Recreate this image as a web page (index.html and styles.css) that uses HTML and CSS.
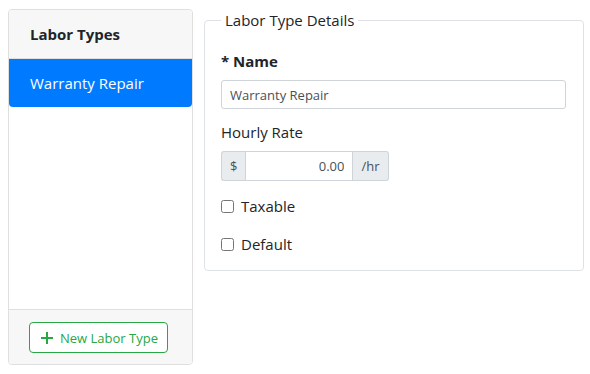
FILE: index.html
```html
<!DOCTYPE html>
<html lang="en">
<head>
    <meta charset="UTF-8">
    <title>Labor Types</title>
    <link rel="stylesheet" href="styles.css">
</head>
<body>
    <div class="page">
        <div class="types-card">
            <div class="types-header">Labor Types</div>
            <div class="types-list">
                <a href="#" class="types-item active">Warranty Repair</a>
            </div>
            <div class="types-footer">
                <button class="btn-new">
                    <svg width="12" height="12" viewBox="0 0 12 12"><path d="M6 0v12M0 6h12" stroke="#28a745" stroke-width="2" fill="none"/></svg>
                    New Labor Type
                </button>
            </div>
        </div>

        <fieldset class="details">
            <legend>Labor Type Details</legend>

            <label class="field-label required" for="name">* Name</label>
            <input class="text-input" id="name" type="text" value="Warranty Repair">

            <label class="field-label rate-label" for="rate">Hourly Rate</label>
            <div class="input-group">
                <span class="addon">$</span>
                <input class="rate-input" id="rate" type="text" value="0.00">
                <span class="addon">/hr</span>
            </div>

            <label class="check"><input type="checkbox"> Taxable</label>
            <label class="check"><input type="checkbox"> Default</label>
        </fieldset>
    </div>
</body>
</html>
```

FILE: styles.css
```css
html, body {
    margin: 0;
    height: 100%;
    font-family: "Segoe UI", "Open Sans", sans-serif;
    font-size: 15px;
    color: #212529;
    background: #fff;
}

.page {
    display: flex;
    align-items: flex-start;
    padding: 9px 0 0 8px;
}

.types-card {
    flex-shrink: 0;
    width: 185px;
    height: 356px;
    box-sizing: border-box;
    border: 1px solid #dfdfdf;
    border-radius: 4px;
    display: flex;
    flex-direction: column;
    overflow: hidden;
}

.types-header {
    padding: 12px 21px;
    line-height: 24px;
    font-weight: bold;
    background: #f7f7f7;
    border-bottom: 1px solid #dfdfdf;
}

.types-list {
    flex: 1;
}

.types-item {
    display: block;
    padding: 12px 21px;
    line-height: 24px;
    color: #212529;
    text-decoration: none;
}

.types-item.active {
    background: #007bff;
    color: #fff;
    border-radius: 0 0 4px 4px;
}

.types-footer {
    background: #f7f7f7;
    border-top: 1px solid #dfdfdf;
    padding: 12px 20px;
    height: 55px;
    box-sizing: border-box;
}

.btn-new {
    display: flex;
    align-items: center;
    gap: 7px;
    height: 31px;
    width: 139px;
    padding: 0 0 0 11px;
    white-space: nowrap;
    font-family: inherit;
    font-size: 13px;
    color: #28a745;
    background: #fff;
    border: 1px solid #28a745;
    border-radius: 4px;
    cursor: pointer;
}

.btn-new svg {
    flex-shrink: 0;
}

.details {
    flex-shrink: 0;
    width: 380px;
    box-sizing: border-box;
    margin: -1px 0 0 11px;
    padding: 4px 16px 14px 16px;
    border: 1px solid #dee2e6;
    border-radius: 4px;
    display: flex;
    flex-direction: column;
    align-items: flex-start;
}

.details legend {
    padding: 0 4px;
    line-height: 24px;
    font-size: 15px;
}

.field-label {
    line-height: 24px;
    margin-bottom: 7px;
}

.required {
    font-weight: bold;
    margin-top: 13px;
}

.rate-label {
    margin-top: 11px;
}

.text-input {
    width: 345px;
    height: 29px;
    box-sizing: border-box;
    border: 1px solid #ced4da;
    border-radius: 3px;
    padding: 0 8px;
    font-family: inherit;
    font-size: 13px;
    color: #495057;
}

.input-group {
    display: flex;
    height: 30px;
}

.addon {
    display: flex;
    align-items: center;
    padding: 0 8px;
    font-size: 13px;
    color: #495057;
    background: #e9ecef;
    border: 1px solid #ced4da;
}

.addon:first-child {
    border-radius: 3px 0 0 3px;
    border-right: none;
}

.addon:last-child {
    border-radius: 0 3px 3px 0;
    border-left: none;
}

.rate-input {
    width: 108px;
    box-sizing: border-box;
    border: 1px solid #ced4da;
    padding: 0 8px;
    text-align: right;
    font-family: inherit;
    font-size: 13px;
    color: #495057;
}

.check {
    display: flex;
    align-items: center;
    line-height: 24px;
    margin-top: 14px;
}

.check input {
    margin: 0 7px 0 0;
    width: 13px;
    height: 13px;
}

.input-group + .check {
    margin-top: 13px;
}
```
